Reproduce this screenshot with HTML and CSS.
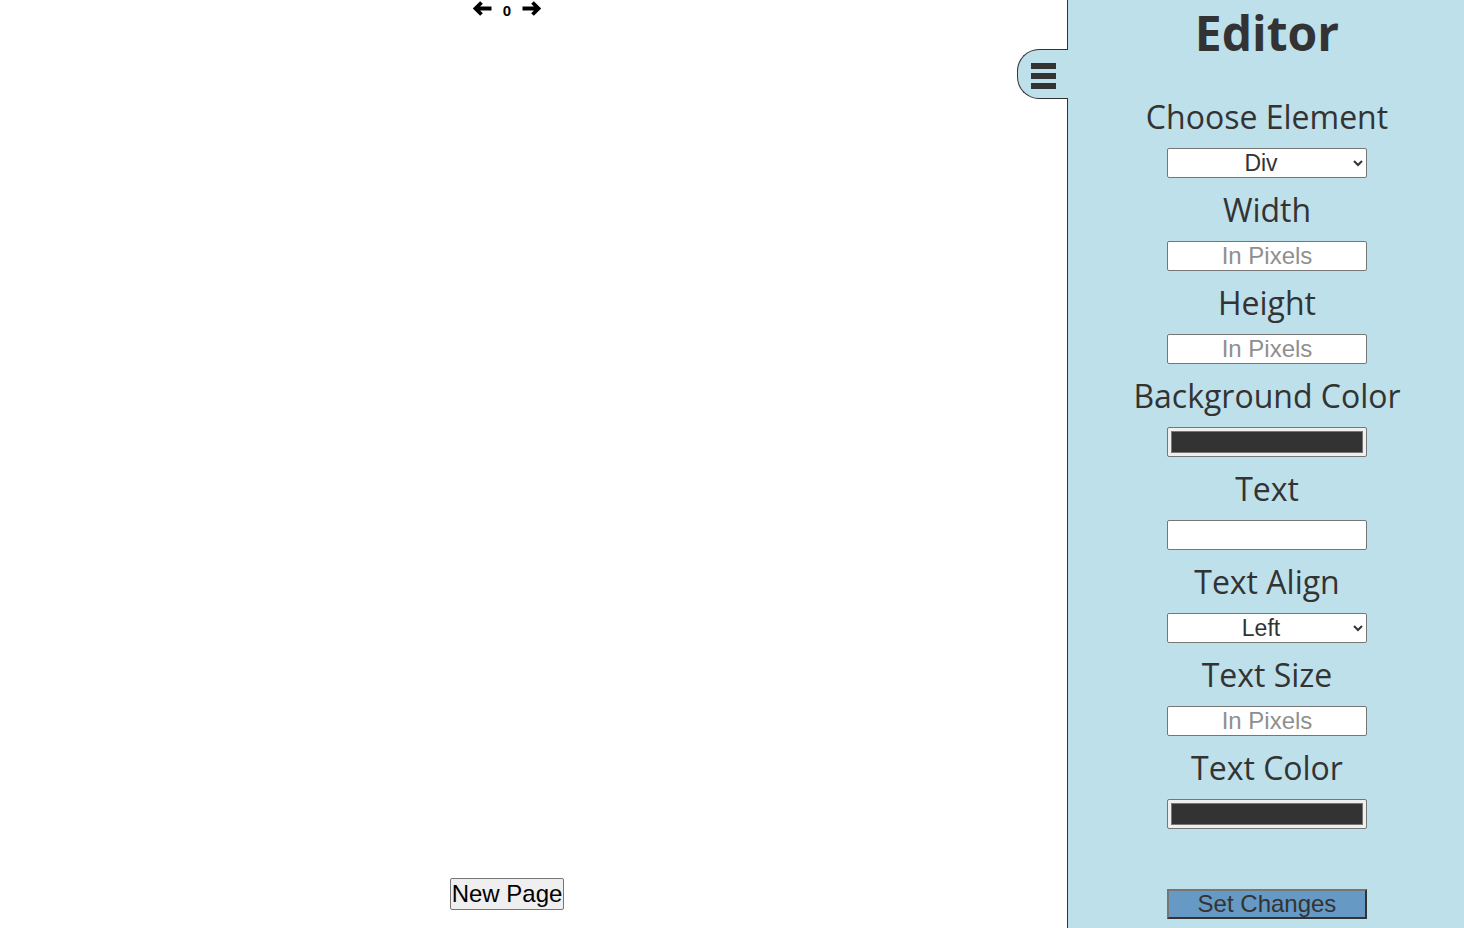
FILE: index.html
```html
<!DOCTYPE html>
<html lang="en">
<head>
<meta charset="utf-8">
<title>Editor</title>
<link rel="stylesheet" href="styles.css">
</head>
<body>
<main class="canvas">
  <div class="pager">
    <svg class="arrow" viewBox="0 0 20 15" aria-label="Previous page"><path d="M19.5 7.5H3.5M9.5 1.5l-6 6 6 6"/></svg>
    <span class="page-num">0</span>
    <svg class="arrow" viewBox="0 0 20 15" aria-label="Next page"><path d="M0.5 7.5H16.5M10.5 1.5l6 6-6 6"/></svg>
  </div>
  <button class="new-page" type="button">New Page</button>
</main>
<aside class="panel">
  <button class="toggle" type="button" aria-label="Toggle editor"><span></span><span></span><span></span></button>
  <h1 class="title">Editor</h1>
  <div class="field">
    <label class="label" for="el">Choose Element</label>
    <select class="control select" id="el"><option>Div</option><option>Paragraph</option><option>Heading</option></select>
  </div>
  <div class="field">
    <label class="label" for="w">Width</label>
    <input class="control" id="w" type="text" placeholder="In Pixels">
  </div>
  <div class="field">
    <label class="label" for="h">Height</label>
    <input class="control" id="h" type="text" placeholder="In Pixels">
  </div>
  <div class="field">
    <label class="label" for="bg">Background Color</label>
    <input class="control color" id="bg" type="color" value="#333333">
  </div>
  <div class="field">
    <label class="label" for="t">Text</label>
    <input class="control" id="t" type="text">
  </div>
  <div class="field">
    <label class="label" for="ta">Text Align</label>
    <select class="control select" id="ta"><option>Left</option><option>Center</option><option>Right</option></select>
  </div>
  <div class="field">
    <label class="label" for="ts">Text Size</label>
    <input class="control" id="ts" type="text" placeholder="In Pixels">
  </div>
  <div class="field">
    <label class="label" for="tc">Text Color</label>
    <input class="control color" id="tc" type="color" value="#333333">
  </div>
  <button class="submit" type="button">Set Changes</button>
</aside>
</body>
</html>
```
FILE: styles.css
```css
html, body {
  margin: 0;
  height: 100%;
}
body {
  display: flex;
  overflow: hidden;
  background: #fff;
  font-family: "Liberation Sans", Arial, sans-serif;
}
.canvas {
  flex: none;
  width: 1067px;
  height: 928px;
  padding: 0 53px 18px 0;
  box-sizing: border-box;
  display: flex;
  flex-direction: column;
  align-items: center;
  justify-content: space-between;
}
.pager {
  display: flex;
  align-items: flex-start;
  gap: 11px;
  padding-top: 1px;
}
.arrow {
  width: 20px;
  height: 15px;
  display: block;
  fill: none;
  stroke: #000;
  stroke-width: 3.8;
}
.page-num {
  font-family: "Liberation Sans", Arial, sans-serif;
  font-weight: bold;
  font-size: 15px;
  color: #000;
  line-height: 17px;
  padding-top: 1px;
}
.new-page {
  font-family: "Liberation Sans", Arial, sans-serif;
  font-size: 24px;
  color: #000;
  background: #efefef;
  border: 1px solid #767676;
  border-radius: 2px;
  padding: 1px 1px;
  line-height: 28px;
}
.panel {
  position: relative;
  flex: none;
  width: 394px;
  height: 928px;
  padding-left: 2px;
  border-left: 1px solid #333;
  background: #bee0ea;
  text-align: center;
  color: #333;
  font-family: "Open Sans", sans-serif;
}
.toggle {
  position: absolute;
  left: -51px;
  top: 49px;
  width: 51px;
  height: 50px;
  box-sizing: border-box;
  border: 1px solid #333;
  border-right: none;
  border-radius: 22px 0 0 22px;
  background: #bee0ea;
  padding: 13px 0 0 13px;
  display: flex;
  flex-direction: column;
  gap: 4px;
}
.toggle span {
  display: block;
  width: 25px;
  height: 6px;
  background: #333;
}
.title {
  margin: 0 0 20px;
  font-size: 48px;
  font-weight: 700;
  line-height: 65px;
}
.field {
  display: flex;
  flex-direction: column;
  align-items: center;
}
.label {
  display: block;
  font-size: 32px;
  line-height: 44px;
  margin: 10px 0 9px;
}
.control {
  box-sizing: border-box;
  width: 200px;
  height: 30px;
  margin: 0;
  border: 1px solid #767676;
  border-radius: 2px;
  background: #fff;
  font-family: "Liberation Sans", Arial, sans-serif;
  font-size: 24px;
  color: #333;
  text-align: center;
  padding: 0 2px;
}
.control::placeholder {
  color: #8f8f8f;
}
.select {
  font-size: 23px;
  text-align: center;
  padding: 0 4px;
}
.color {
  background: #efefef;
  padding: 3px 3px;
  cursor: pointer;
}
.color::-webkit-color-swatch-wrapper {
  padding: 0;
}
.color::-webkit-color-swatch {
  border: 1px solid #777;
  border-radius: 0;
}
.submit {
  display: block;
  margin: 60px auto 0;
  box-sizing: border-box;
  width: 200px;
  height: 30px;
  padding: 0;
  background: #6699c4;
  border: 2px solid;
  border-color: #767676 #333 #333 #767676;
  font-family: "Liberation Sans", Arial, sans-serif;
  font-size: 24px;
  line-height: 26px;
  color: #333;
}
```
